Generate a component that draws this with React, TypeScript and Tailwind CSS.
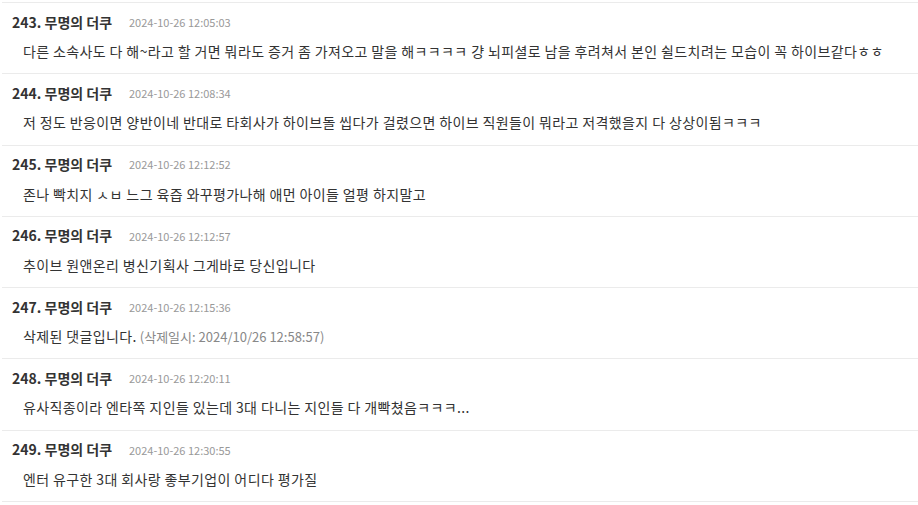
const comments = [
  {
    no: 243,
    date: '2024-10-26 12:05:03',
    text: '다른 소속사도 다 해~라고 할 거면 뭐라도 증거 좀 가져오고 말을 해ㅋㅋㅋㅋ 걍 뇌피셜로 남을 후려쳐서 본인 쉴드치려는 모습이 꼭 하이브같다ㅎㅎ',
  },
  {
    no: 244,
    date: '2024-10-26 12:08:34',
    text: '저 정도 반응이면 양반이네 반대로 타회사가 하이브돌 씹다가 걸렸으면 하이브 직원들이 뭐라고 저격했을지 다 상상이됨ㅋㅋㅋ',
  },
  {
    no: 245,
    date: '2024-10-26 12:12:52',
    text: '존나 빡치지 ㅅㅂ 느그 육즙 와꾸평가나해 애먼 아이들 얼평 하지말고',
  },
  {
    no: 246,
    date: '2024-10-26 12:12:57',
    text: '추이브 원앤온리 병신기획사 그게바로 당신입니다',
  },
  {
    no: 247,
    date: '2024-10-26 12:15:36',
    text: '삭제된 댓글입니다.',
    deleted: '(삭제일시: 2024/10/26 12:58:57)',
  },
  {
    no: 248,
    date: '2024-10-26 12:20:11',
    text: '유사직종이라 엔타쪽 지인들 있는데 3대 다니는 지인들 다 개빡쳤음ㅋㅋㅋ...',
  },
  {
    no: 249,
    date: '2024-10-26 12:30:55',
    text: '엔터 유구한 3대 회사랑 좋부기업이 어디다 평가질',
  },
];

const App = () => {
  return (
    <div
      className="min-h-[505px] w-[918px] bg-white pt-[2px] pl-[2px]"
      style={{ fontFamily: '"Noto Sans CJK KR", "Noto Sans", sans-serif' }}
    >
      <ul className="border-t border-[#ebebeb]">
        {comments.map((c) => (
          <li
            key={c.no}
            className="flex flex-col border-b border-[#ebebeb] pt-[9px] pr-[10px] pb-[12.3px] pl-[10px]"
          >
            <div className="flex h-[20px] items-center">
              <span className="w-[117px] text-[14px] font-bold text-[#333]">
                {c.no}. 무명의 더쿠
              </span>
              <span className="text-[11px] text-[#999]">{c.date}</span>
            </div>
            <p className="mt-[9px] h-[20px] pl-[11px] text-[14px] leading-[20px] tracking-[0.38px] whitespace-nowrap text-[#333]">
              {c.text}
              {c.deleted && (
                <span className="text-[13px] tracking-[0px] text-[#888]"> {c.deleted}</span>
              )}
            </p>
          </li>
        ))}
      </ul>
    </div>
  );
};

export default App;
